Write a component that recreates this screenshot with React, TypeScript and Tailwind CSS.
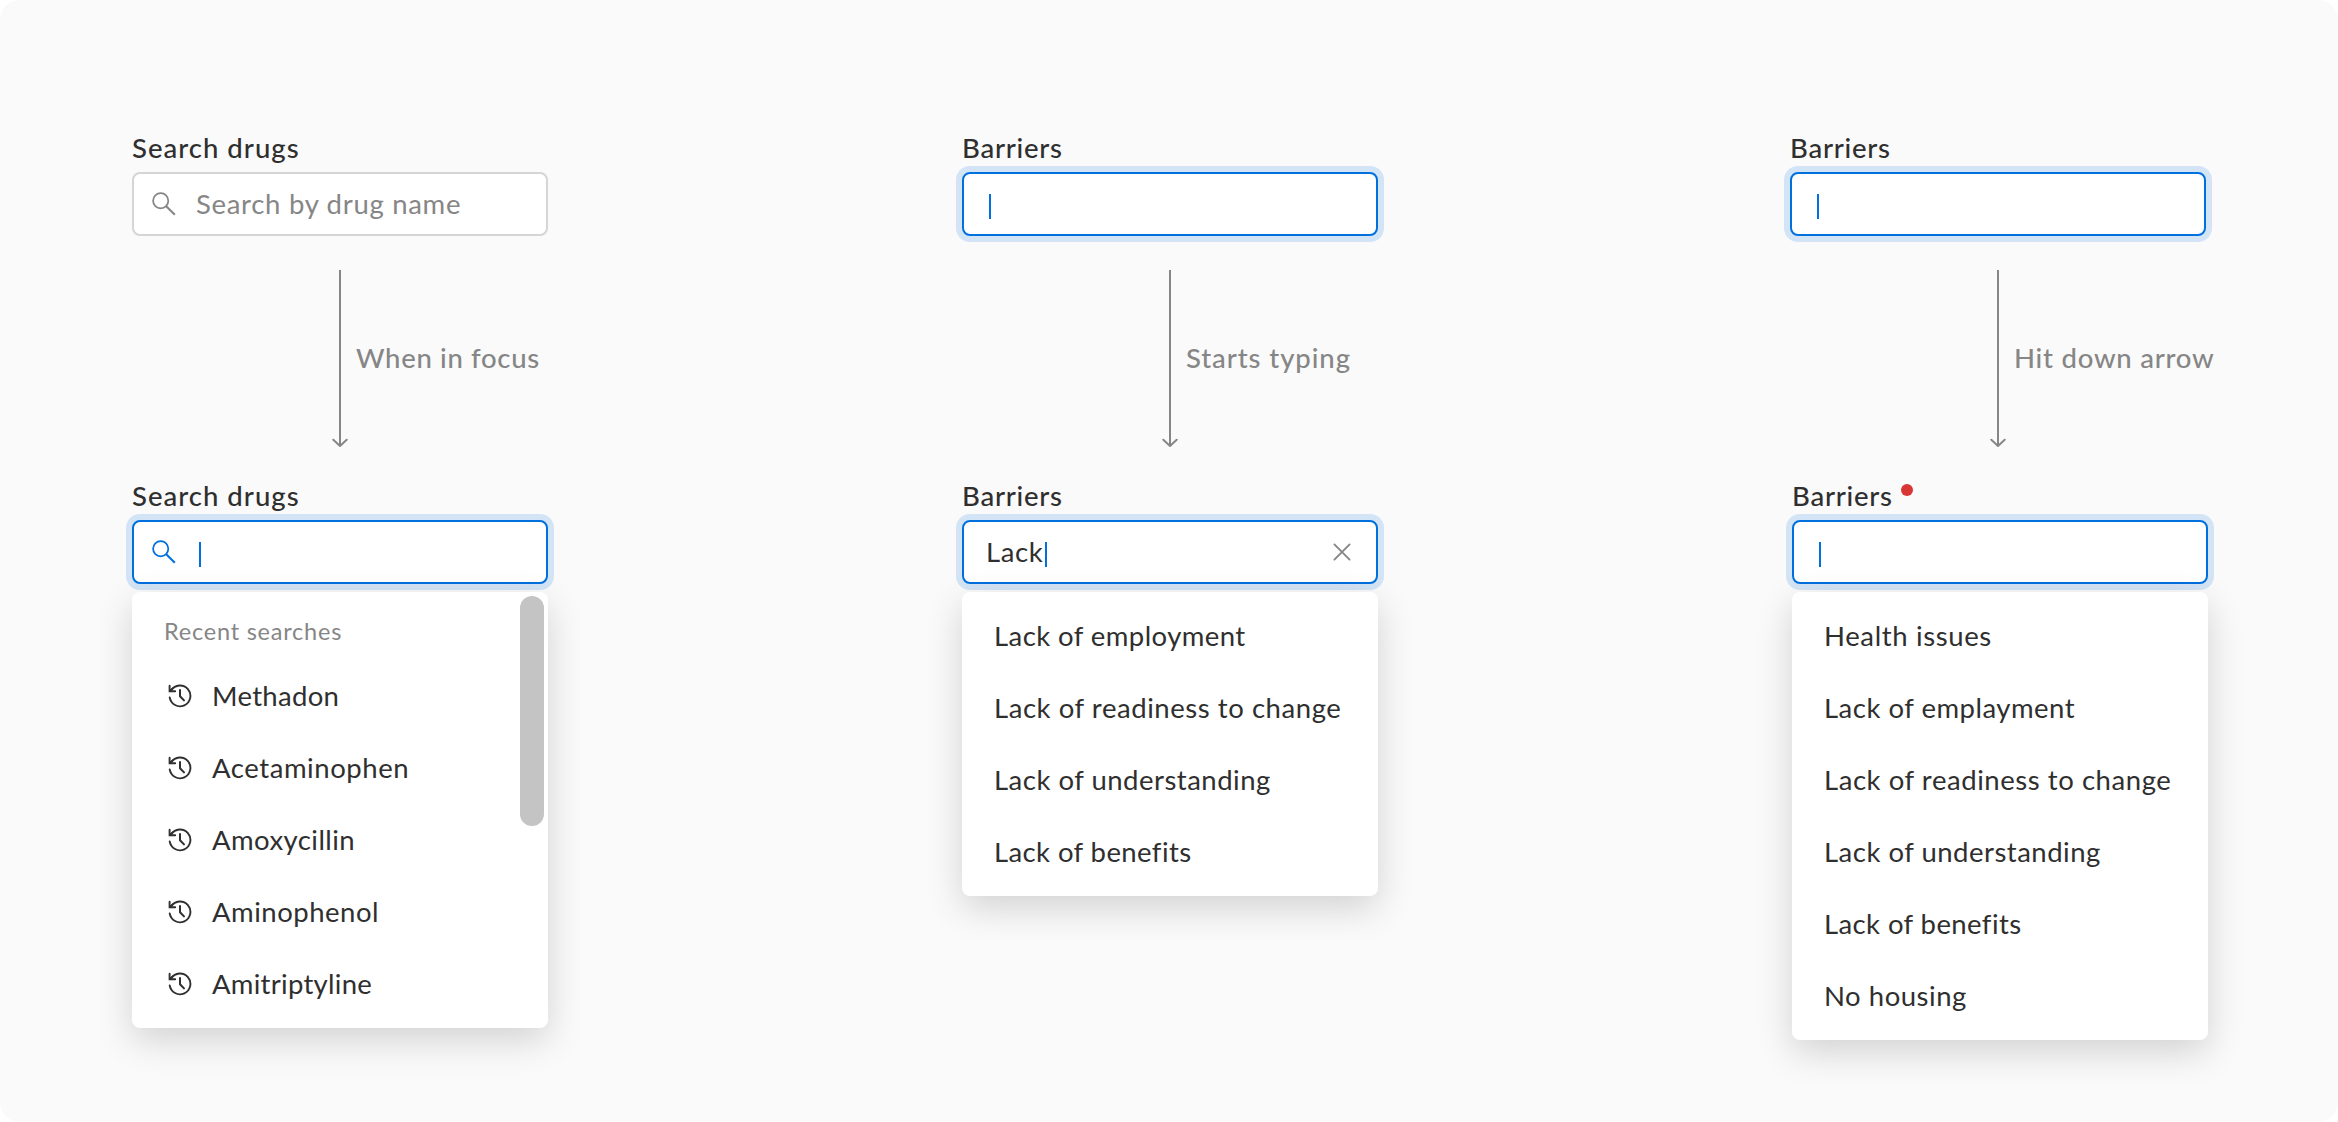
import type { ReactNode } from "react";

function SearchIcon({ className }: { className: string }) {
  return (
    <svg className={className} width="24" height="24" viewBox="0 0 24 24" fill="none" stroke="currentColor" strokeWidth="1.75">
      <circle cx="8.7" cy="8.7" r="7.6" />
      <path d="M14 14L22.8 22.8" strokeWidth="2.1" />
    </svg>
  );
}

function HistoryIcon() {
  return (
    <svg className="shrink-0" width="24" height="24" viewBox="0 0 24 24" fill="none" stroke="currentColor" strokeWidth="1.9">
      <path d="M1.7 13.4A10.4 10.4 0 1 0 3.3 6.2" strokeLinecap="round" />
      <path d="M1.6 1.7V7.3H7.2" strokeLinecap="round" />
      <path d="M1.6 6.9L5.2 3.9" strokeWidth="1.5" />
      <path d="M12 6V12.2L16 16.4" strokeWidth="2" strokeLinecap="round" strokeLinejoin="round" />
    </svg>
  );
}

function CloseIcon() {
  return (
    <svg width="18" height="18" viewBox="0 0 18 18" fill="none" stroke="#868686" strokeWidth="1.9" strokeLinecap="round">
      <path d="M1.4 1.4L16.6 16.6M16.6 1.4L1.4 16.6" />
    </svg>
  );
}

function Label({ children, className, required }: { children: string; className: string; required?: boolean }) {
  return (
    <div className="flex h-10 text-[27.5px] leading-[31px] font-medium">
      <span className={className}>{children}</span>
      {required && <span className="mt-1 ml-2 size-3 rounded-full bg-[#da3535]" />}
    </div>
  );
}

function Field({ focused, children }: { focused?: boolean; children: ReactNode }) {
  return (
    <div
      className={
        focused
          ? "flex h-16 items-center rounded-lg border-2 border-[#0070dd] bg-white pr-[25px] ring-6 ring-[#d3e4f6]"
          : "flex h-16 items-center rounded-lg border-2 border-[#d5d5d5] bg-white pr-[25px]"
      }
    >
      {children}
    </div>
  );
}

function Caret({ className }: { className: string }) {
  return <span className={`mt-1 h-[25px] w-[2px] bg-[#0070dd] ${className}`} />;
}

function Step({ children, className }: { children: string; className: string }) {
  return (
    <div className="mt-[34px] ml-[200px] flex h-[178px] items-center text-[#868686]">
      <svg className="shrink-0" width="16" height="178" viewBox="0 0 16 178" fill="none" stroke="currentColor" strokeWidth="2">
        <path d="M8 0V176" />
        <path d="M1.3 169.8L8 176L14.7 169.8" strokeLinecap="round" strokeLinejoin="round" />
      </svg>
      <span className={`mb-[3px] ml-2 text-[27.5px] leading-10 font-medium whitespace-nowrap ${className}`}>{children}</span>
    </div>
  );
}

function Menu({ children }: { children: ReactNode }) {
  return (
    <div className="relative mt-2 rounded-lg bg-white py-2 text-[27.5px] shadow-[0_12px_36px_rgba(0,0,0,0.16)]">{children}</div>
  );
}

function Option({ children, className, recent }: { children: string; className: string; recent?: boolean }) {
  return (
    <div className={recent ? "flex h-[72px] items-center gap-5 pl-9" : "flex h-[72px] items-center pl-8"}>
      {recent && <HistoryIcon />}
      <span className={`mb-px whitespace-nowrap ${className}`}>{children}</span>
    </div>
  );
}

export default function App() {
  return (
    <div className="h-[1122px] w-[2338px] bg-white font-['Lato',sans-serif] text-[#2f2f2f]">
      <main className="flex h-full gap-[414px] rounded-[20px] bg-[#fafafa] pt-[132px] pl-[132px]">
        <section className="w-[416px]">
          <Label className="tracking-[1.02px]">Search drugs</Label>
          <Field>
            <SearchIcon className="ml-[18px] shrink-0 text-[#868686]" />
            <span className="ml-5 text-[27.5px] tracking-[0.7px] text-[#868686]">Search by drug name</span>
          </Field>
          <Step className="tracking-[0.67px]">When in focus</Step>
          <div className="mt-8">
            <Label className="tracking-[1.02px]">Search drugs</Label>
            <Field focused>
              <SearchIcon className="ml-[18px] shrink-0 text-[#0070dd]" />
              <Caret className="ml-[23px]" />
            </Field>
          </div>
          <Menu>
            <div className="h-[60px] pt-[9px] pl-8 text-[23.5px] leading-[44px] tracking-[0.78px] text-[#868686]">
              Recent searches
            </div>
            <Option recent className="tracking-[0.31px]">Methadon</Option>
            <Option recent className="tracking-[0.57px]">Acetaminophen</Option>
            <Option recent className="tracking-[0.43px]">Amoxycillin</Option>
            <Option recent className="tracking-[0.51px]">Aminophenol</Option>
            <Option recent className="tracking-[0.28px]">Amitriptyline</Option>
            <div className="absolute top-1 right-1 h-[230px] w-6 rounded-full bg-[#c4c4c4]" />
          </Menu>
        </section>

        <section className="w-[416px]">
          <Label className="tracking-[0.75px]">Barriers</Label>
          <Field focused>
            <Caret className="ml-[25px]" />
          </Field>
          <Step className="tracking-[0.91px]">Starts typing</Step>
          <div className="mt-8">
            <Label className="tracking-[0.75px]">Barriers</Label>
            <Field focused>
              <span className="mb-px ml-[22px] text-[27.5px] tracking-[0.6px]">Lack</span>
              <Caret className="ml-[2px]" />
              <span className="ml-auto">
                <CloseIcon />
              </span>
            </Field>
          </div>
          <Menu>
            <Option className="tracking-[0.43px]">Lack of employment</Option>
            <Option className="tracking-[0.56px]">Lack of readiness to change</Option>
            <Option className="tracking-[0.5px]">Lack of understanding</Option>
            <Option className="tracking-[0.4px]">Lack of benefits</Option>
          </Menu>
        </section>

        <section className="-ml-[2px] w-[418px]">
          <div className="w-[416px]">
            <Label className="tracking-[0.75px]">Barriers</Label>
            <Field focused>
              <Caret className="ml-[25px]" />
            </Field>
            <Step className="tracking-[0.76px]">Hit down arrow</Step>
          </div>
          <div className="mt-8 ml-[2px]">
            <Label required className="tracking-[0.75px]">Barriers</Label>
            <Field focused>
              <Caret className="ml-[25px]" />
            </Field>
            <Menu>
              <Option className="tracking-[0.63px]">Health issues</Option>
              <Option className="tracking-[0.5px]">Lack of emplayment</Option>
              <Option className="tracking-[0.56px]">Lack of readiness to change</Option>
              <Option className="tracking-[0.5px]">Lack of understanding</Option>
              <Option className="tracking-[0.4px]">Lack of benefits</Option>
              <Option className="tracking-[0.52px]">No housing</Option>
            </Menu>
          </div>
        </section>
      </main>
    </div>
  );
}
